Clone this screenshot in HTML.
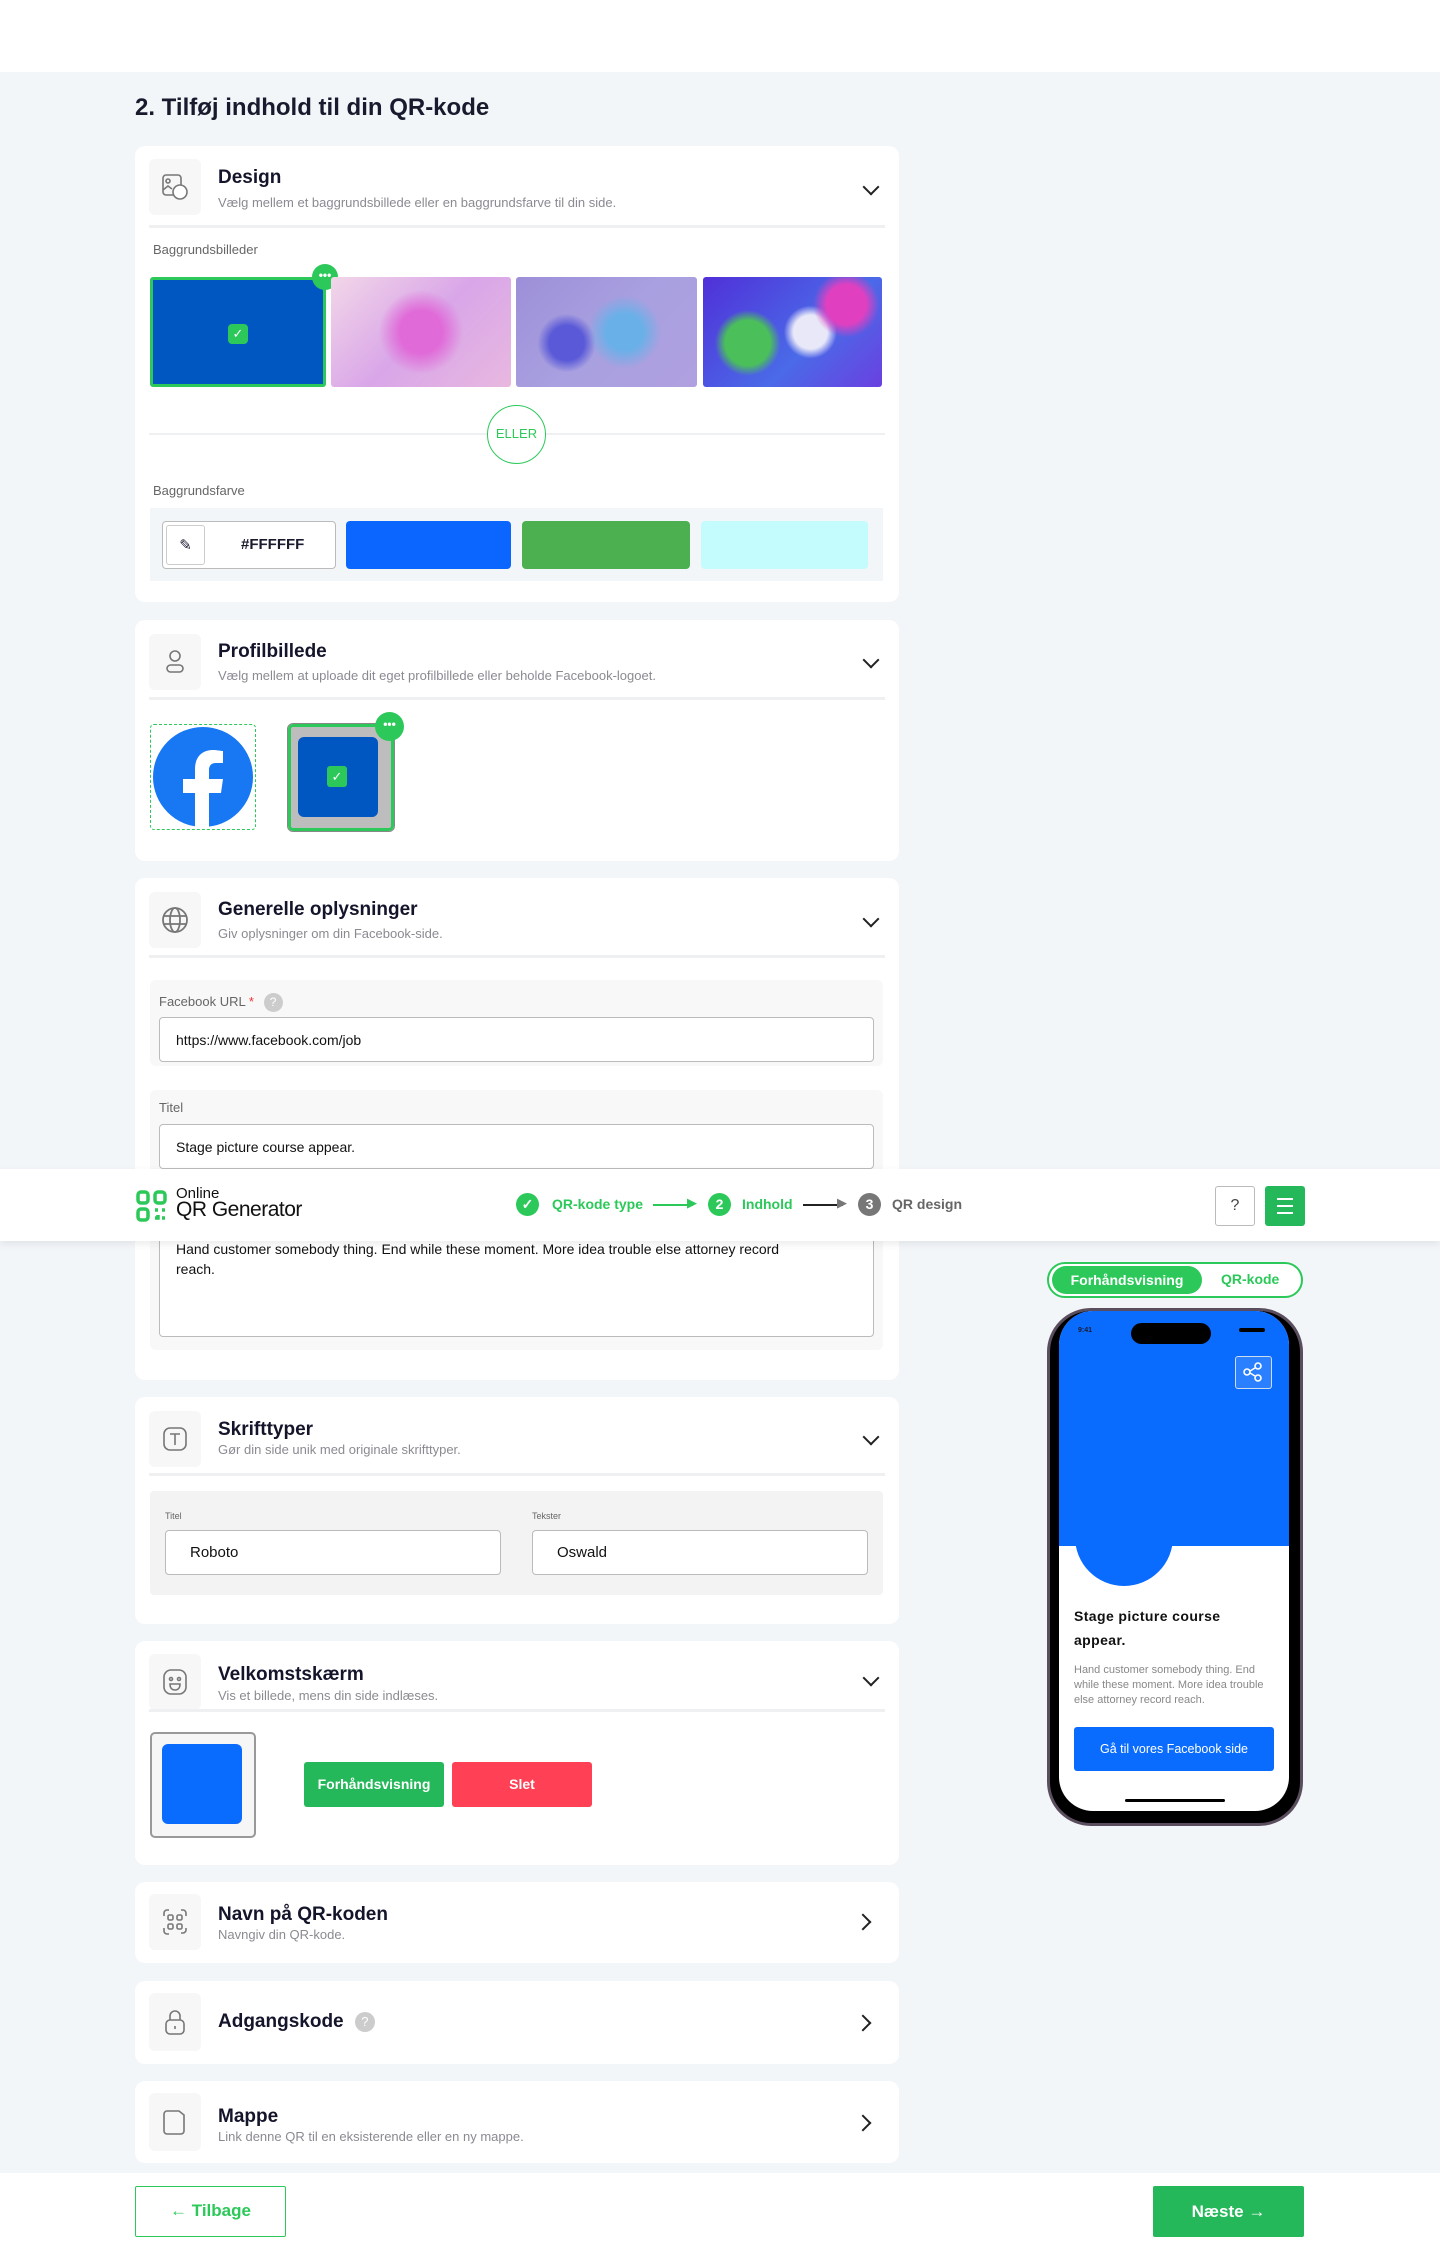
<!DOCTYPE html>
<html><head><meta charset="utf-8"><style>
*{box-sizing:border-box;margin:0;padding:0}
body{width:1440px;height:2250px;position:relative;background:#f3f6f9;font-family:"Liberation Sans",sans-serif;color:#1a1a2e;overflow:hidden}
.a{position:absolute}
.card{position:absolute;left:135px;width:764px;background:#fff;border-radius:10px}
.ib{position:absolute;left:14px;width:52px;height:56px;background:#f7f7f8;border-radius:6px;display:flex;align-items:center;justify-content:center}
.t{position:absolute;left:83px;font-size:19px;font-weight:bold;color:#14142b}
.s{position:absolute;left:83px;font-size:13px;color:#8a8a92}
.div{position:absolute;left:14px;right:14px;height:3px;background:#eef0f2}
.chev{position:absolute;right:22px;width:12px;height:12px;border-right:2px solid #222;border-bottom:2px solid #222}
.down{transform:rotate(45deg)}
.right{transform:rotate(-45deg)}
.lbl{position:absolute;font-size:13px;color:#666}
.inp{position:absolute;background:#fff;border:1px solid #bbb;border-radius:4px;font-size:14px;padding-left:16px;display:flex;align-items:center;color:#111}
.g{color:#2cc95a}
</style></head><body>
<div class="a" style="left:0;top:0;width:1440px;height:72px;background:#fff"></div>
<div class="a" style="left:135px;top:94px;font-size:24px;font-weight:bold;color:#1a1a2e">2. Tilføj indhold til din QR-kode</div>

<!-- Design -->
<div class="card" style="top:146px;height:456px">
 <div class="ib" style="top:13px"><svg width="30" height="30" viewBox="0 0 30 30" fill="none" stroke="#777" stroke-width="1.6"><rect x="3" y="3" width="18" height="20" rx="3"/><circle cx="8" cy="9" r="2"/><path d="M3 18l5-4 4 3"/><circle cx="20" cy="20" r="7" fill="#fff"/></svg></div>
 <div class="t" style="top:21px">Design</div>
 <div class="s" style="top:49px">Vælg mellem et baggrundsbillede eller en baggrundsfarve til din side.</div>
 <div class="chev down" style="top:35px"></div>
 <div class="div" style="top:79px"></div>
 <div class="lbl" style="left:18px;top:96px">Baggrundsbilleder</div>
 <div class="a" style="left:15px;top:131px;width:176px;height:110px;background:#0057c2;border:3px solid #2cc95a;border-radius:3px"><div class="a" style="left:75px;top:44px;width:20px;height:20px;background:#2cc95a;border-radius:4px;color:#fff;font-size:13px;text-align:center;line-height:20px">✓</div></div>
 <div class="a" style="left:177px;top:118px;width:26px;height:26px;background:#2cc95a;border-radius:50%;color:#fff;font-size:12px;text-align:center;line-height:22px;font-weight:bold">•••</div>
 <div class="a" style="left:196px;top:131px;width:180px;height:110px;border-radius:3px;background:radial-gradient(circle at 50% 50%,#e06ad8 0 20%,transparent 40%),linear-gradient(135deg,#f2d6e8,#d9a6e8 50%,#e8b8e0)"></div>
 <div class="a" style="left:381px;top:131px;width:181px;height:110px;border-radius:3px;background:radial-gradient(circle at 60% 50%,#6ab0e8 0 15%,transparent 30%),radial-gradient(circle at 28% 60%,#5a5ad8 0 12%,transparent 20%),linear-gradient(135deg,#9d8fd8,#a8a0e0 50%,#b0a0e0)"></div>
 <div class="a" style="left:568px;top:131px;width:179px;height:110px;border-radius:3px;background:radial-gradient(circle at 25% 60%,#4bc05a 0 15%,transparent 22%),radial-gradient(circle at 80% 25%,#e040c0 0 12%,transparent 20%),radial-gradient(circle at 60% 50%,#e8e8f8 0 14%,transparent 22%),linear-gradient(135deg,#5030d8,#4a6ae8 60%,#6a40e0)"></div>
 <div class="a" style="left:14px;right:14px;top:287px;height:2px;background:#eef0f2"></div>
 <div class="a" style="left:352px;top:259px;width:59px;height:59px;border:1.5px solid #2cc95a;border-radius:50%;background:#fff;color:#2cc95a;font-size:13px;text-align:center;line-height:56px">ELLER</div>
 <div class="lbl" style="left:18px;top:337px">Baggrundsfarve</div>
 <div class="a" style="left:15px;top:362px;width:733px;height:73px;background:#f3f6f9"></div>
 <div class="a" style="left:27px;top:375px;width:174px;height:48px;background:#fff;border:1px solid #bbb;border-radius:4px"><div class="a" style="left:3px;top:3px;width:39px;height:40px;border:1px solid #ccc;border-radius:3px;text-align:center;line-height:40px;font-size:15px">✎</div><div class="a" style="left:78px;top:14px;font-size:15px;font-weight:bold">#FFFFFF</div></div>
 <div class="a" style="left:211px;top:375px;width:165px;height:48px;background:#0a66ff;border-radius:4px"></div>
 <div class="a" style="left:387px;top:375px;width:168px;height:48px;background:#4caf50;border-radius:4px"></div>
 <div class="a" style="left:566px;top:375px;width:167px;height:48px;background:#c4fbfc;border-radius:4px"></div>
</div>

<!-- Profil -->
<div class="card" style="top:620px;height:241px">
 <div class="ib" style="top:14px"><svg width="30" height="30" viewBox="0 0 30 30" fill="none" stroke="#777" stroke-width="1.6"><circle cx="15" cy="9" r="5"/><rect x="7" y="18" width="16" height="7" rx="3.5"/></svg></div>
 <div class="t" style="top:21px">Profilbillede</div>
 <div class="s" style="top:48px">Vælg mellem at uploade dit eget profilbillede eller beholde Facebook-logoet.</div>
 <div class="chev down" style="top:34px"></div>
 <div class="div" style="top:77px"></div>
 <div class="a" style="left:15px;top:104px;width:106px;height:106px;border:1px dashed #2cc95a;border-radius:4px;overflow:hidden"><svg width="104" height="104" viewBox="0 0 104 104"><circle cx="52" cy="52" r="50" fill="#1877f2"/><path d="M58 104V68h12l2-14H58v-9c0-4 2-7 7-7h7V26c-2 0-6-1-10-1-11 0-18 7-18 19v10H32v14h12v36z" fill="#fff"/></svg></div>
 <div class="a" style="left:153px;top:104px;width:106px;height:107px;background:#bdbdbd;border:3px solid #2cc95a;border-radius:5px;outline:1px solid #888"><div class="a" style="left:7px;top:10px;width:80px;height:80px;background:#0057c2;border-radius:6px"><div class="a" style="left:29px;top:29px;width:20px;height:21px;background:#2cc95a;border-radius:3px;color:#fff;font-size:13px;text-align:center;line-height:21px">✓</div></div></div>
 <div class="a" style="left:240px;top:92px;width:29px;height:29px;background:#2cc95a;border-radius:50%;color:#fff;font-size:12px;text-align:center;line-height:25px;font-weight:bold">•••</div>
</div>

<!-- Generelle -->
<div class="card" style="top:878px;height:502px">
 <div class="ib" style="top:14px"><svg width="30" height="30" viewBox="0 0 30 30" fill="none" stroke="#777" stroke-width="1.8"><circle cx="15" cy="15" r="12"/><ellipse cx="15" cy="15" rx="5" ry="12"/><path d="M3 11h24M3 19h24"/></svg></div>
 <div class="t" style="top:21px">Generelle oplysninger</div>
 <div class="s" style="top:48px">Giv oplysninger om din Facebook-side.</div>
 <div class="chev down" style="top:35px"></div>
 <div class="div" style="top:77px"></div>
 <div class="a" style="left:15px;top:102px;width:733px;height:86px;background:#f8f8f8;border-radius:6px"></div>
 <div class="lbl" style="left:24px;top:115px">Facebook URL <span style="color:#e33">*</span> <span style="display:inline-block;width:19px;height:19px;border-radius:50%;background:#ccc;color:#fff;text-align:center;line-height:19px;font-size:12px;margin-left:6px">?</span></div>
 <div class="inp" style="left:24px;top:139px;width:715px;height:45px">https://www.facebook.com/job</div>
 <div class="a" style="left:15px;top:212px;width:733px;height:260px;background:#f8f8f8;border-radius:6px"></div>
 <div class="lbl" style="left:24px;top:222px">Titel</div>
 <div class="inp" style="left:24px;top:246px;width:715px;height:45px">Stage picture course appear.</div>
 <div class="inp" style="left:24px;top:310px;width:715px;height:149px;align-items:flex-start;padding-top:50px;line-height:20px;font-size:14px;padding-right:70px">Hand customer somebody thing. End while these moment. More idea trouble else attorney record reach.</div>
</div>

<!-- Skrifttyper -->
<div class="card" style="top:1397px;height:227px">
 <div class="ib" style="top:14px"><svg width="30" height="30" viewBox="0 0 30 30" fill="none" stroke="#777" stroke-width="1.6"><rect x="4" y="4" width="22" height="22" rx="6"/><path d="M10 10h10M15 10v11"/></svg></div>
 <div class="t" style="top:22px">Skrifttyper</div>
 <div class="s" style="top:45px">Gør din side unik med originale skrifttyper.</div>
 <div class="chev down" style="top:34px"></div>
 <div class="div" style="top:76px"></div>
 <div class="a" style="left:15px;top:94px;width:733px;height:104px;background:#f3f3f3;border-radius:4px"></div>
 <div class="lbl" style="left:30px;top:114px;font-size:9px">Titel</div>
 <div class="lbl" style="left:397px;top:114px;font-size:9px">Tekster</div>
 <div class="inp" style="left:30px;top:133px;width:336px;height:45px;padding-left:24px;font-size:15px">Roboto</div>
 <div class="inp" style="left:397px;top:133px;width:336px;height:45px;padding-left:24px;font-size:15px">Oswald</div>
</div>

<!-- Velkomst -->
<div class="card" style="top:1641px;height:224px">
 <div class="ib" style="top:13px"><svg width="30" height="30" viewBox="0 0 30 30" fill="none" stroke="#777" stroke-width="1.6"><rect x="4" y="3" width="22" height="24" rx="7"/><circle cx="11" cy="12" r="1.5"/><circle cx="19" cy="12" r="1.5"/><path d="M10 17h10c0 4-2 6-5 6s-5-2-5-6z"/></svg></div>
 <div class="t" style="top:23px">Velkomstskærm</div>
 <div class="s" style="top:47px">Vis et billede, mens din side indlæses.</div>
 <div class="chev down" style="top:31px"></div>
 <div class="div" style="top:68px"></div>
 <div class="a" style="left:15px;top:91px;width:106px;height:106px;background:#f6f6f6;border:2px solid #999;border-radius:5px"><div class="a" style="left:10px;top:10px;width:80px;height:80px;background:#0a6cff;border-radius:6px"></div></div>
 <div class="a" style="left:169px;top:121px;width:140px;height:45px;background:#25b85a;border-radius:3px;color:#fff;font-size:14px;font-weight:bold;text-align:center;line-height:45px">Forhåndsvisning</div>
 <div class="a" style="left:317px;top:121px;width:140px;height:45px;background:#ff4055;border-radius:3px;color:#fff;font-size:14px;font-weight:bold;text-align:center;line-height:45px">Slet</div>
</div>

<!-- Navn -->
<div class="card" style="top:1882px;height:81px">
 <div class="ib" style="top:12px"><svg width="30" height="30" viewBox="0 0 30 30" fill="none" stroke="#777" stroke-width="1.6"><path d="M4 9V6a3 3 0 013-3h2M21 3h2a3 3 0 013 3v3M26 21v2a3 3 0 01-3 3h-2M9 27H7a3 3 0 01-3-3v-3"/><rect x="8" y="8" width="5" height="5" rx="1.5"/><rect x="17" y="8" width="5" height="5" rx="1.5"/><rect x="8" y="17" width="5" height="5" rx="1.5"/><rect x="17" y="17" width="5" height="5" rx="1.5"/></svg></div>
 <div class="t" style="top:22px">Navn på QR-koden</div>
 <div class="s" style="top:45px">Navngiv din QR-kode.</div>
 <div class="chev right" style="top:34px;right:30px"></div>
</div>

<!-- Adgangskode -->
<div class="card" style="top:1981px;height:83px">
 <div class="ib" style="top:12px;height:58px"><svg width="30" height="30" viewBox="0 0 30 30" fill="none" stroke="#777" stroke-width="1.6"><rect x="6" y="13" width="18" height="14" rx="4"/><path d="M10 13V9a5 5 0 0110 0v4M15 19v3"/></svg></div>
 <div class="t" style="top:30px">Adgangskode <span style="display:inline-block;width:20px;height:20px;border-radius:50%;background:#ccc;color:#fff;text-align:center;line-height:20px;font-size:13px;font-weight:normal;margin-left:6px;vertical-align:1px">?</span></div>
 <div class="chev right" style="top:36px;right:30px"></div>
</div>

<!-- Mappe -->
<div class="card" style="top:2081px;height:82px">
 <div class="ib" style="top:12px;height:58px"><svg width="30" height="30" viewBox="0 0 30 30" fill="none" stroke="#777" stroke-width="1.6"><path d="M7 4h12l5 4v16a3 3 0 01-3 3H7a3 3 0 01-3-3V7a3 3 0 013-3z"/></svg></div>
 <div class="t" style="top:25px">Mappe</div>
 <div class="s" style="top:48px">Link denne QR til en eksisterende eller en ny mappe.</div>
 <div class="chev right" style="top:36px;right:30px"></div>
</div>

<!-- bottom bar -->
<div class="a" style="left:0;top:2173px;width:1440px;height:77px;background:#fff"></div>
<div class="a g" style="left:135px;top:2186px;width:151px;height:51px;border:1.5px solid #2cc95a;border-radius:2px;font-size:17px;font-weight:bold;text-align:center;line-height:48px">← Tilbage</div>
<div class="a" style="left:1153px;top:2186px;width:151px;height:51px;background:#25b85a;border-radius:2px;font-size:17px;font-weight:bold;color:#fff;text-align:center;line-height:51px">Næste →</div>

<!-- header -->
<div class="a" style="left:0;top:1169px;width:1440px;height:72px;background:#fff;box-shadow:0 3px 8px rgba(0,0,0,.08)"></div>
<svg class="a" style="left:136px;top:1190px" width="32" height="32" viewBox="0 0 32 32" fill="none" stroke="#2cc95a" stroke-width="3.5"><rect x="2" y="2" width="10" height="11" rx="3"/><rect x="19" y="2" width="10" height="11" rx="3"/><rect x="2" y="19" width="10" height="11" rx="3"/><path d="M19 20h3M26 20h3M19 28h3v-3M26 28h3"/></svg>
<div class="a" style="left:176px;top:1186px;font-size:15px;color:#111;line-height:15px">Online</div>
<div class="a" style="left:176px;top:1199px;font-size:21px;color:#111;line-height:22px;letter-spacing:-0.5px">QR Generator</div>
<div class="a" style="left:516px;top:1193px;width:23px;height:23px;border-radius:50%;background:#2cc95a;color:#fff;font-size:14px;text-align:center;line-height:23px;font-weight:bold">✓</div>
<div class="a g" style="left:552px;top:1196px;font-size:14px;font-weight:bold">QR-kode type</div>
<div class="a" style="left:653px;top:1204px;width:40px;height:2px;background:#2cc95a"></div><div class="a g" style="left:687px;top:1195px;font-size:13px">▶</div>
<div class="a" style="left:708px;top:1193px;width:23px;height:23px;border-radius:50%;background:#2cc95a;color:#fff;font-size:14px;text-align:center;line-height:23px;font-weight:bold">2</div>
<div class="a g" style="left:742px;top:1196px;font-size:14px;font-weight:bold">Indhold</div>
<div class="a" style="left:803px;top:1204px;width:40px;height:2px;background:#222"></div><div class="a" style="left:837px;top:1195px;font-size:13px;color:#777">▶</div>
<div class="a" style="left:858px;top:1193px;width:23px;height:23px;border-radius:50%;background:#777;color:#fff;font-size:14px;text-align:center;line-height:23px;font-weight:bold">3</div>
<div class="a" style="left:892px;top:1196px;font-size:14px;font-weight:bold;color:#666">QR design</div>
<div class="a" style="left:1215px;top:1186px;width:40px;height:40px;border:1px solid #bbb;border-radius:3px;text-align:center;line-height:38px;font-size:16px;color:#444">?</div>
<div class="a" style="left:1265px;top:1186px;width:40px;height:40px;background:#25b85a;border-radius:3px"><div class="a" style="left:12px;top:12px;width:16px;height:2px;background:#fff;box-shadow:0 7px 0 #fff,0 14px 0 #fff"></div></div>

<!-- preview toggle -->
<div class="a" style="left:1047px;top:1262px;width:256px;height:36px;border:2px solid #2cc95a;border-radius:18px;background:#fff">
 <div class="a" style="left:3px;top:2px;width:150px;height:28px;border-radius:14px;background:#2cc95a;color:#fff;font-size:14px;font-weight:bold;text-align:center;line-height:28px">Forhåndsvisning</div>
 <div class="a g" style="left:172px;top:7px;font-size:14px;font-weight:bold">QR-kode</div>
</div>
<!-- phone -->
<div class="a" style="left:1047px;top:1308px;width:256px;height:518px;border-radius:44px;background:#000;border:3px solid #5a4e5e"></div>
<div class="a" style="left:1059px;top:1311px;width:230px;height:500px;border-radius:34px;background:#fff;overflow:hidden">
 <div class="a" style="left:0;top:0;width:230px;height:235px;background:#0a6cff"></div>
 <div class="a" style="left:16px;top:177px;width:98px;height:98px;border-radius:50%;background:#0a6cff"></div>
 <div class="a" style="left:19px;top:16px;font-size:7px;font-weight:bold">9:41</div>
 <div class="a" style="left:72px;top:12px;width:80px;height:21px;border-radius:11px;background:#000"></div>
 <div class="a" style="left:180px;top:17px;width:26px;height:4px;background:#000;border-radius:2px"></div>
 <div class="a" style="left:176px;top:45px;width:37px;height:33px;border:1px solid #cde;border-radius:3px;background:#2a80ff"><svg width="35" height="31" viewBox="0 0 35 31" fill="none" stroke="#fff" stroke-width="1.6"><circle cx="11" cy="15" r="3"/><circle cx="22" cy="9" r="3"/><circle cx="22" cy="21" r="3"/><path d="M14 14l5-3M14 16l5 3"/></svg></div>
 <div class="a" style="left:15px;top:293px;width:200px;font-size:14px;font-weight:bold;line-height:24px;letter-spacing:.4px;color:#111">Stage picture course appear.</div>
 <div class="a" style="left:15px;top:352px;width:205px;font-size:11px;line-height:15px;color:#888;font-family:'Liberation Sans Narrow','Liberation Sans',sans-serif">Hand customer somebody thing. End while these moment. More idea trouble else attorney record reach.</div>
 <div class="a" style="left:15px;top:416px;width:200px;height:44px;background:#0a6cff;border-radius:3px;color:#fff;font-size:12.5px;text-align:center;line-height:44px">Gå til vores Facebook side</div>
 <div class="a" style="left:66px;top:488px;width:100px;height:3px;background:#000;border-radius:2px"></div>
</div>
</body></html>
